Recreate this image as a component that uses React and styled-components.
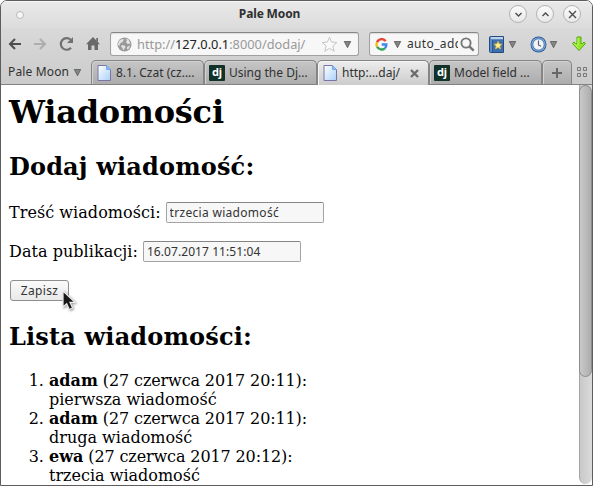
import React from 'react';
import styled, { createGlobalStyle } from 'styled-components';

const Global = createGlobalStyle`
  * { box-sizing: border-box; }
  html, body { margin: 0; padding: 0; background: #fff; overflow: hidden; }
  svg { display: block; flex: none; }
`;

const Window = styled.div`
  width: 593px;
  height: 486px;
  display: flex;
  flex-direction: column;
  border: 1px solid #5f5c5f;
  border-radius: 7px 7px 0 0;
  overflow: hidden;
  background: #fff;
  font-family: 'Noto Sans', 'Open Sans', sans-serif;
  font-size: 12px;
  color: #333;
`;

const Chrome = styled.div`
  flex: none;
  height: 84px;
  background: linear-gradient(#e9e9e9, #dcdcdc 27px, #d9d9d9 27px, #cbcbcb);
  border-bottom: 1px solid #828282;
`;

const TitleBar = styled.header`
  height: 27px;
  display: grid;
  grid-template-columns: 100px 1fr 100px;
  align-items: center;
  border-top: 1px solid #f6f6f6;
`;

const MenuDot = styled.span`
  width: 8px;
  height: 8px;
  margin-left: 15px;
  border: 1px solid #b9b9b9;
  border-radius: 50%;
  background: #f6f6f6;
`;

const Title = styled.h1`
  margin: -2px 0 0 -54px;
  text-align: center;
  font-size: 12px;
  line-height: 18px;
  font-weight: 700;
  letter-spacing: -0.15px;
  color: #303030;
`;

const WindowButtons = styled.div`
  display: flex;
  gap: 9px;
  margin: -2px 0 0 17px;
`;

const RoundButton = styled.button`
  width: 18px;
  height: 18px;
  padding: 0;
  display: grid;
  place-items: center;
  border: 1px solid #b2b2b2;
  border-radius: 50%;
  background: linear-gradient(#fafafa, #e9e9e9);
`;

const NavBar = styled.nav`
  height: 32px;
  display: flex;
  align-items: center;
  padding-left: 7px;
`;

const NavIcons = styled.div`
  display: flex;
  align-items: center;
  gap: 11px;
  width: 102px;
`;

const Field = styled.div`
  width: ${(p) => p.$width}px;
  height: 24px;
  display: flex;
  align-items: center;
  padding-left: ${(p) => p.$pad}px;
  border: 1px solid #a0a0a0;
  border-top-color: #858585;
  border-radius: 3px;
  background: #f7f7f7;
  box-shadow: inset 0 1px 1px #dcdcdc;
`;

const SearchField = styled(Field)`
  margin-left: 10px;
`;

const Address = styled.span`
  width: 187px;
  margin-left: 5px;
  font-size: 12.8px;
  line-height: 20px;
  color: #999;
  white-space: nowrap;
  b { font-weight: 400; color: #222; }
`;

const Query = styled.span`
  width: 51px;
  margin: 0 2px 0 6px;
  overflow: hidden;
  white-space: nowrap;
  font-size: 12px;
  letter-spacing: 0.35px;
  line-height: 20px;
`;

const Tools = styled.div`
  display: flex;
  align-items: center;
  margin-left: 10px;
`;

const ToolGroup = styled.div`
  display: flex;
  align-items: center;
  gap: ${(p) => p.$gap ?? 4}px;
  width: ${(p) => p.$width}px;
`;

const TabStrip = styled.div`
  height: 24px;
  display: flex;
  align-items: flex-end;
`;

const AppMenu = styled.button`
  width: 90px;
  height: 24px;
  display: flex;
  align-items: center;
  gap: 4px;
  padding: 0 0 0 7px;
  border: 0;
  background: none;
  font: 12px/20px 'Noto Sans', sans-serif;
  letter-spacing: 0.15px;
  color: #303030;
  white-space: nowrap;
`;

const Tab = styled.div`
  width: ${(p) => p.$width || 113}px;
  height: ${(p) => (p.$active ? 25 : 24)}px;
  margin-bottom: ${(p) => (p.$active ? -1 : 0)}px;
  display: flex;
  align-items: center;
  gap: 4px;
  padding-left: 5px;
  border: 1px solid #858585;
  border-bottom: 0;
  border-radius: 5px 5px 0 0;
  background: ${(p) => (p.$active ? 'linear-gradient(#ededed, #cccccc)' : 'linear-gradient(#c6c6c6, #acacac)')};
  box-shadow: inset 1px 1px 0 ${(p) => (p.$active ? '#f6f6f6' : '#d2d2d2')};
  white-space: nowrap;
`;

const TabLabel = styled.span`
  font-size: 12px;
  line-height: 20px;
  color: #303030;
`;

const CloseIcon = styled.span`
  margin-left: 6px;
`;

const NewTab = styled(Tab)`
  justify-content: center;
  padding: 0;
`;

const GridSlot = styled.div`
  height: 23px;
  padding: 6px 0 0 5px;
`;

const Viewport = styled.div`
  flex: 1;
  min-height: 0;
  display: flex;
`;

const Page = styled.main`
  flex: 1;
  padding: 8px;
  overflow: hidden;
  font-family: 'DejaVu Serif', serif;
  font-size: 16px;
  line-height: 19px;
  color: #000;
`;

const PageTitle = styled.h1`
  margin: 0 0 22px;
  font-size: 32px;
  line-height: 38px;
  letter-spacing: -0.2px;
`;

const Heading = styled.h2`
  margin: 0 0 ${(p) => p.$gap}px;
  font-size: 24px;
  line-height: 28px;
  letter-spacing: 0.17px;
`;

const FormRow = styled.label`
  display: flex;
  align-items: center;
  gap: 5px;
  height: 21px;
  margin-bottom: 18px;
  letter-spacing: 0.05px;
  white-space: nowrap;
`;

const LabelText = styled.span`
  margin-top: -1px;
`;

const TextInput = styled.input`
  width: 158px;
  height: 21px;
  padding: 0 3px;
  border: 1px solid #a3a3a3;
  border-top-color: #858585;
  border-radius: 2px;
  background: #f7f7f7;
  font: 12px 'Noto Sans', sans-serif;
  letter-spacing: ${(p) => p.$spacing}px;
  color: #333;
  outline: none;
`;

const Actions = styled.div`
  position: relative;
  height: 22px;
  margin: 0 0 21px 1px;
`;

const SaveButton = styled.button`
  display: block;
  width: 59px;
  height: 21px;
  padding: 0;
  border: 1px solid #8e8e8e;
  border-radius: 3px;
  background: linear-gradient(#fafafa, #e9e9e9);
  font: 12px/18px 'Noto Sans', sans-serif;
  letter-spacing: 0.3px;
  color: #333;
`;

const Pointer = styled.svg`
  position: absolute;
  left: 51px;
  top: 10px;
  filter: drop-shadow(1px 1px 1px #0006);
`;

const Messages = styled.ol`
  margin: 0;
  padding-left: 40px;
`;

const MessageDate = styled.span`
  letter-spacing: -0.12px;
`;

const ScrollTrack = styled.div`
  width: 13px;
  margin-bottom: 1px;
  border-left: 1px solid #a5a5a5;
  border-radius: 0 0 7px 7px;
  background: linear-gradient(90deg, #c9c9c9, #dadada);
`;

const ScrollThumb = styled.div`
  width: 13px;
  height: 292px;
  margin-left: -1px;
  border: 1px solid #8c8c8c;
  border-radius: 7px;
  background: linear-gradient(90deg, #c9c9c9, #adadad);
`;

const Arrow = ({ forward }) => (
  <svg width="14" height="14" viewBox="0 0 14 14" fill="none" stroke={forward ? '#adadad' : '#4d4d4d'} strokeWidth="2">
    <path d={forward ? 'M1 7H12M7 2L12 7L7 12' : 'M13 7H2M7 2L2 7L7 12'} />
  </svg>
);

const Reload = () => (
  <svg width="16" height="16" viewBox="0 0 16 16">
    <path d="M12.6 3.7A5.8 5.8 0 1 0 13 11.8" fill="none" stroke="#707070" strokeWidth="2.2" />
    <path d="M15 1V7H9Z" fill="#707070" />
  </svg>
);

const Home = () => (
  <svg width="16" height="16" viewBox="0 0 16 16" fill="#696969">
    <path d="M8 1L15 8.3H13V14H9.5V9.5H6.5V14H3V8.3H1Z" />
    <path d="M11.3 2H13V6L11.3 5Z" />
  </svg>
);

const Globe = () => (
  <svg width="15" height="15" viewBox="0 0 15 15">
    <circle cx="7.5" cy="7.5" r="7" fill="#9a9a9a" />
    <path d="M2 4L5 2L7 2.5L5.5 5L3 6.5L2.5 9L1 8Z M8 1.5L10 3L9 5L10.5 7L13.5 6.5L12.5 4.5L11.5 2.5Z M5 8L8.5 9L8 11L6 13.5L5.5 11L4 9.5Z M10 10L13 8.5L12 11.5L10 12.5Z" fill="#e3e3e3" />
  </svg>
);

const Star = () => (
  <svg width="17" height="17" viewBox="0 0 17 17">
    <path d="M8.5 1.2L10.5 6L15.9 6.5L11.8 9.9L13.2 15.2L8.5 12.4L3.8 15.2L5.2 9.9L1.1 6.5L6.5 6Z" fill="#fafafa" stroke="#c5c5c5" strokeLinejoin="round" />
  </svg>
);

const Caret = () => (
  <svg width="9" height="9" viewBox="0 0 9 9">
    <path d="M1.3 1.5H7.7L4.5 7.7Z" fill="#858585" stroke="#585858" strokeWidth=".8" />
  </svg>
);

const Google = () => (
  <svg width="13" height="13" viewBox="0 0 13 13" fill="none" strokeWidth="2.3">
    <path d="M10.7 3.1A5 5 0 0 0 2.1 4.2" stroke="#e94235" />
    <path d="M2.1 4.2A5 5 0 0 0 2.1 8.8" stroke="#f7bb05" />
    <path d="M2.1 8.8A5 5 0 0 0 9.8 10.3" stroke="#34a354" />
    <path d="M9.8 10.3A5 5 0 0 0 11.4 6.5H6.7" stroke="#4285ee" />
  </svg>
);

const Magnifier = () => (
  <svg width="15" height="15" viewBox="0 0 15 15" fill="none" stroke="#777">
    <circle cx="6" cy="6" r="4.6" strokeWidth="1.9" />
    <path d="M9.3 9.3L13.7 13.7" strokeWidth="2.6" />
  </svg>
);

const Bookmarks = () => (
  <svg width="16" height="17" viewBox="0 0 16 17">
    <path d="M.5 1.5Q.5 .5 1.5 .5H14.5V16.5H1.5Q.5 16.5 .5 15.5Z" fill="#5b8cc8" stroke="#244c80" />
    <path d="M2 2H14" stroke="#dfe8f2" strokeWidth="1.6" />
    <path d="M4 4H14V16H4Z" fill="#3f6fae" />
    <path d="M3.5 4V16" stroke="#2d5992" />
    <path d="M9 5.3L10.2 7.9L13 8.2L10.9 10.1L11.5 12.9L9 11.4L6.5 12.9L7.1 10.1L5 8.2L7.8 7.9Z" fill="#fff095" stroke="#d9b52c" strokeWidth=".8" />
  </svg>
);

const Clock = () => (
  <svg width="17" height="17" viewBox="0 0 17 17">
    <circle cx="8.5" cy="8.5" r="8" fill="#2c5b99" />
    <circle cx="8.5" cy="8.5" r="7.1" fill="#8bb0dc" />
    <circle cx="8.5" cy="8.5" r="5.7" fill="#f3f4f5" stroke="#3c6fae" />
    <path d="M8.5 4.5V9L11 10.3" fill="none" stroke="#58626c" strokeWidth="1.2" />
  </svg>
);

const Download = () => (
  <svg width="16" height="16" viewBox="0 0 16 16">
    <path d="M6 1H10V7.5H11.5L13 6L14.5 7.5L8 14.5L1.5 7.5L3 6L4.5 7.5H6Z" fill="#8ee629" stroke="#55a80d" strokeLinejoin="round" />
    <path d="M7 2V9.5M3 7.5L8 12.7" fill="none" stroke="#c3fa6d" />
  </svg>
);

const FileIcon = () => (
  <svg width="15" height="16" viewBox="0 0 15 16">
    <defs>
      <linearGradient id="paper" x2="1" y2="1">
        <stop stopColor="#fff" />
        <stop offset="1" stopColor="#abd0fa" />
      </linearGradient>
    </defs>
    <path d="M1 .5H9.5L13.5 4.5V15.5H1Z" fill="url(#paper)" stroke="#7876a5" />
    <path d="M9.5 .5V4.5H13.5" fill="#8fc4fb" stroke="#6faaf0" />
  </svg>
);

const DjangoBox = styled.span`
  flex: none;
  width: 16px;
  height: 16px;
  margin-left: -1px;
  border-radius: 1px;
  background: #113228;
  color: #fff;
  font: 700 11px/13px 'Noto Sans', sans-serif;
  text-align: center;
`;

const GridIcon = () => (
  <svg width="11" height="11" viewBox="0 0 11 11" fill="none" stroke="#777">
    <path d="M.5 .5H3.5V3.5H.5Z M6.5 .5H9.5V3.5H6.5Z M.5 6.5H3.5V9.5H.5Z M6.5 6.5H9.5V9.5H6.5Z" />
  </svg>
);

const glyphs = { down: 'M1.5 3L4.5 6L7.5 3', up: 'M1.5 6L4.5 3L7.5 6', close: 'M1 1L8 8M8 1L1 8' };

const Glyph = ({ kind, width = 1.4, color = '#4c4c4c' }) => (
  <svg width="9" height="9" viewBox="0 0 9 9" fill="none" stroke={color} strokeWidth={width}>
    <path d={glyphs[kind]} />
  </svg>
);

const messages = [
  ['adam', '27 czerwca 2017 20:11', 'pierwsza wiadomość'],
  ['adam', '27 czerwca 2017 20:11', 'druga wiadomość'],
  ['ewa', '27 czerwca 2017 20:12', 'trzecia wiadomość'],
];

export default function App() {
  return (
    <>
      <Global />
      <Window>
        <Chrome>
          <TitleBar>
            <MenuDot />
            <Title>Pale Moon</Title>
            <WindowButtons>
              {['down', 'up', 'close'].map((kind) => (
                <RoundButton key={kind}><Glyph kind={kind} /></RoundButton>
              ))}
            </WindowButtons>
          </TitleBar>
          <NavBar>
            <NavIcons>
              <Arrow />
              <Arrow forward />
              <Reload />
              <Home />
            </NavIcons>
            <Field $width={249} $pad={6}>
              <Globe />
              <Address>http://<b>127.0.0.1</b>:8000/dodaj/</Address>
              <Star />
              <ToolGroup $width={20} $gap={5}><span /><Caret /></ToolGroup>
            </Field>
            <SearchField $width={110} $pad={5}>
              <ToolGroup $width={26} $gap={5}><Google /><Caret /></ToolGroup>
              <Query>auto_add</Query>
              <Magnifier />
            </SearchField>
            <Tools>
              <ToolGroup $width={41} $gap={3}><Bookmarks /><Caret /></ToolGroup>
              <ToolGroup $width={41} $gap={2}><Clock /><Caret /></ToolGroup>
              <Download />
            </Tools>
          </NavBar>
          <TabStrip>
            <AppMenu>Pale Moon <Caret /></AppMenu>
            <Tab><FileIcon /><TabLabel>8.1. Czat (cz....</TabLabel></Tab>
            <Tab><DjangoBox>dj</DjangoBox><TabLabel>Using the Dj...</TabLabel></Tab>
            <Tab $active $width={112}>
              <FileIcon />
              <TabLabel>http:...daj/</TabLabel>
              <CloseIcon><Glyph kind="close" width={2.4} color="#6c6c6c" /></CloseIcon>
            </Tab>
            <Tab><DjangoBox>dj</DjangoBox><TabLabel>Model field ...</TabLabel></Tab>
            <NewTab $width={30}>
              <svg width="10" height="10" viewBox="0 0 10 10" stroke="#666" strokeWidth="2">
                <path d="M5 0V10M0 5H10" />
              </svg>
            </NewTab>
            <GridSlot><GridIcon /></GridSlot>
          </TabStrip>
        </Chrome>
        <Viewport>
          <Page>
            <PageTitle>Wiadomości</PageTitle>
            <Heading $gap={21}>Dodaj wiadomość:</Heading>
            <FormRow><LabelText>Treść wiadomości:</LabelText><TextInput $spacing={0.3} defaultValue="trzecia wiadomość" /></FormRow>
            <FormRow><LabelText>Data publikacji:</LabelText><TextInput $spacing={0.07} defaultValue="16.07.2017 11:51:04" /></FormRow>
            <Actions>
              <SaveButton>Zapisz</SaveButton>
              <Pointer width="16" height="22" viewBox="0 0 16 22">
                <path d="M2 1V17L5.7 13.7L8.3 19.5L11.6 18L9 12.3H14Z" fill="#181818" stroke="#eee" strokeWidth="1.2" />
              </Pointer>
            </Actions>
            <Heading $gap={20}>Lista wiadomości:</Heading>
            <Messages>
              {messages.map(([name, date, text]) => (
                <li key={text}><b>{name}</b><MessageDate> ({date}):</MessageDate><br />{text}</li>
              ))}
            </Messages>
          </Page>
          <ScrollTrack><ScrollThumb /></ScrollTrack>
        </Viewport>
      </Window>
    </>
  );
}
